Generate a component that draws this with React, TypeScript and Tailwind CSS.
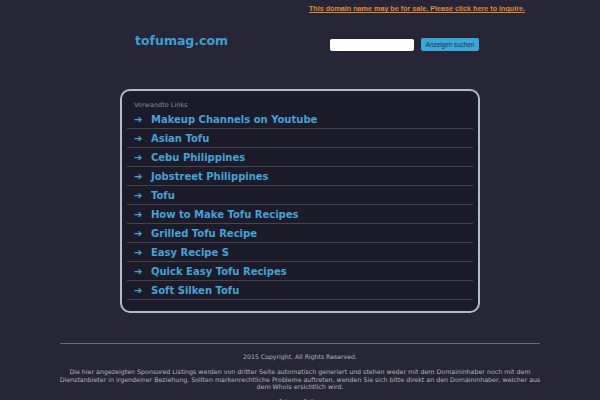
const LINKS = [
  "Makeup Channels on Youtube",
  "Asian Tofu",
  "Cebu Philippines",
  "Jobstreet Philippines",
  "Tofu",
  "How to Make Tofu Recipes",
  "Grilled Tofu Recipe",
  "Easy Recipe S",
  "Quick Easy Tofu Recipes",
  "Soft Silken Tofu",
];

export default function App() {
  return (
    <div className="h-[400px] w-[600px] overflow-hidden bg-[#272636] font-['DejaVu_Sans',sans-serif]">
      <div className="flex justify-end pr-[75px] pt-[4px]">
        <a
          href="#"
          className="font-['Liberation_Sans',sans-serif] text-[7.2px] font-bold leading-[10px] text-[#e08a32] underline"
        >
          This domain name may be for sale. Please click here to inquire.
        </a>
      </div>

      <div className="mx-auto w-[360px]">
        <div className="flex items-start justify-between pl-[15px] pr-[1px] pt-[17px]">
          <div className="text-[12.5px] font-bold leading-[20px] text-[#3e9fd3]">tofumag.com</div>
          <div className="mt-[7px] flex items-center gap-[7px]">
            <input className="h-[12px] w-[84px] rounded-[2px] bg-white" />
            <button className="h-[13px] w-[58px] rounded-[2px] bg-[#3aa6da] font-['Liberation_Sans',sans-serif] text-[6.3px] leading-[13px] text-[#1c3347]">
              Anzeigen suchen
            </button>
          </div>
        </div>

        <div className="mt-[38px] rounded-[10px] border-2 border-[#aebccb] bg-[#1c1b29] px-[5px] pb-[11px] pt-[9px]">
          <div className="pl-[7px] text-[6.5px] leading-[10px] text-[#8a8a96]">Verwandte Links</div>
          {LINKS.map((l) => (
            <div
              key={l}
              className="flex h-[19px] items-center border-b border-[#45454f] pl-[7px] pt-[1px] text-[10px] font-bold text-[#47a2d6]"
            >
              <span className="w-[17px] text-[10px] font-bold">➔</span>
              <span>{l}</span>
            </div>
          ))}
        </div>
      </div>

      <div className="mx-auto mt-[30px] w-[480px] border-t border-[#6f6f7c]" />
      <div className="mt-[8px] text-center text-[6.2px] leading-[9px] text-[#b4b4bc]">
        2015 Copyright. All Rights Reserved.
      </div>
      <div className="mx-auto mt-[7px] w-[482px] text-center text-[6.3px] leading-[7.5px] text-[#b4b4bc]">
        Die hier angezeigten Sponsored Listings werden von dritter Seite automatisch generiert und stehen weder mit dem Domaininhaber noch mit dem Dienstanbieter in irgendeiner Beziehung. Sollten markenrechtliche Probleme auftreten, wenden Sie sich bitte direkt an den Domaininhaber, welcher aus dem Whois ersichtlich wird.
      </div>
      <div className="mt-[6px] text-center text-[6.2px] leading-[9px] text-[#b4b4bc]">Privacy Policy</div>
    </div>
  );
}
